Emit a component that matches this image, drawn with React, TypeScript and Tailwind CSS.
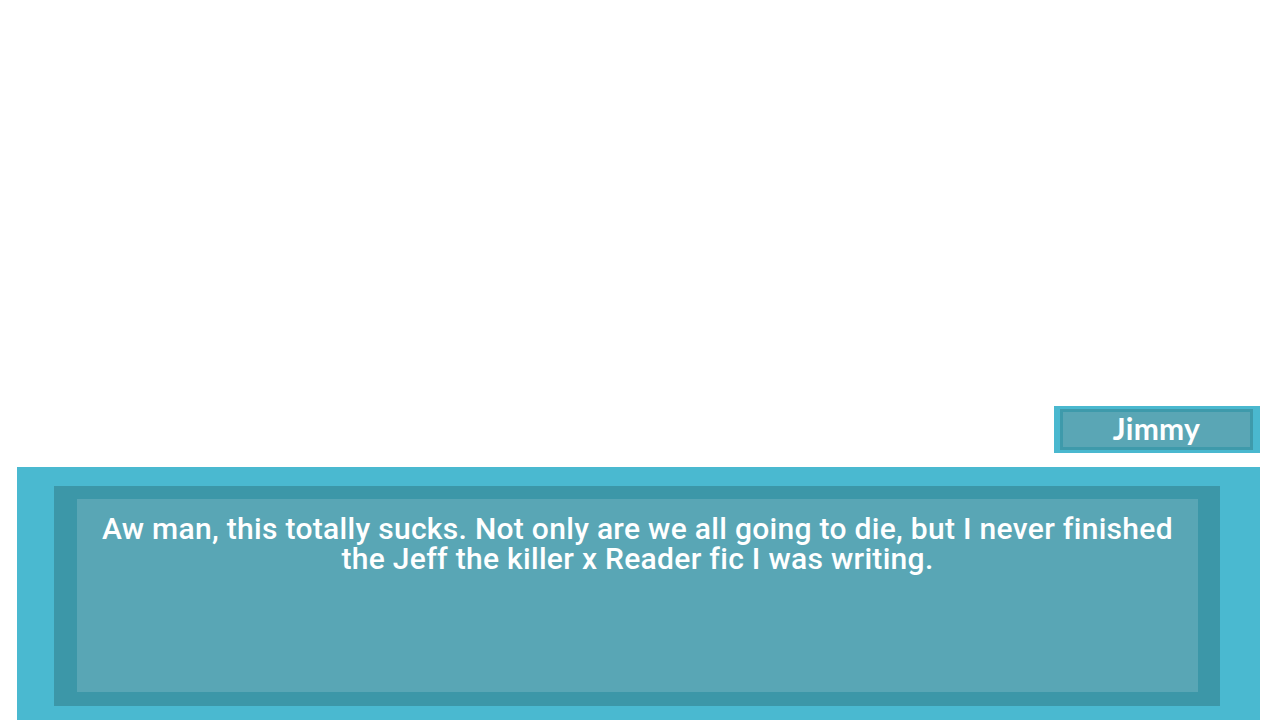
export default function App() {
  return (
    <div className="w-[1280px] h-[720px] bg-white flex flex-col overflow-hidden">
      <div className="flex-1" />
      <div className="flex justify-end pr-[20px] mb-[14px]">
        <div className="w-[206px] h-[47px] bg-[#4ab8cf] pt-[3px] pb-[3px] pl-[6px] pr-[7px]">
          <div className="w-full h-full border-[3px] border-[#3e9aab] bg-[#5aa6b5] flex items-center justify-center">
            <span
              className="text-white font-bold text-[30px] leading-none -mt-[3px] tracking-[0.3px]"
              style={{ fontFamily: "Lato, 'Open Sans', sans-serif" }}
            >
              Jimmy
            </span>
          </div>
        </div>
      </div>
      <div className="ml-[17px] mr-[20px] h-[253px] bg-[#4ab9d0] pl-[37px] pr-[40px] pt-[19px] pb-[14px]">
        <div className="w-full h-full bg-[#3c97a8] pl-[23px] pr-[22px] pt-[13px] pb-[14px]">
          <div className="w-full h-full bg-[#59a6b5] pt-[15px]">
            <p
              className="text-white text-center text-[30px] leading-[30px] font-medium tracking-[0.3px]"
              style={{ fontFamily: "Roboto, 'Liberation Sans', sans-serif" }}
            >
              Aw man, this totally sucks. Not only are we all going to die, but I never finished
              <br />
              the Jeff the killer x Reader fic I was writing.
            </p>
          </div>
        </div>
      </div>
    </div>
  );
}
